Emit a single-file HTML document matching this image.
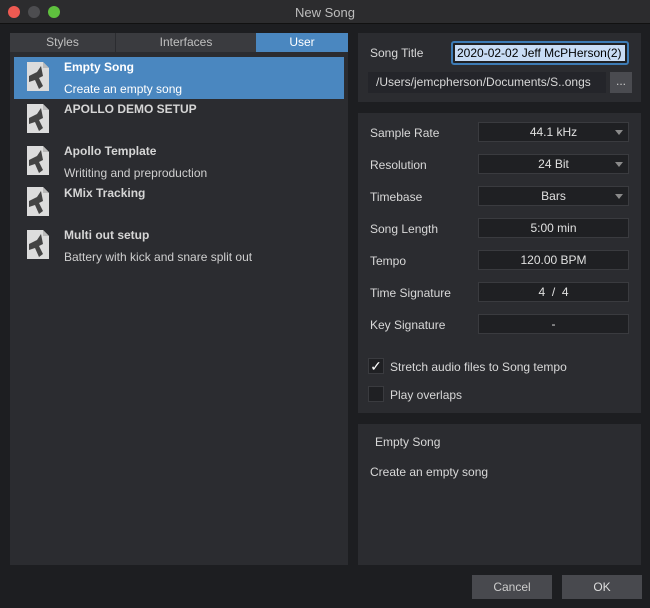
<!DOCTYPE html>
<html><head><style>
*{margin:0;padding:0;box-sizing:border-box}
body{width:650px;height:608px;background:#1d1e21;font-family:"Liberation Sans",sans-serif;font-size:12px;color:#d0d0d0;position:relative;overflow:hidden}
.a{position:absolute}
.panel{position:absolute;background:#2b2c30}
.lbl{position:absolute;left:370px;color:#d8d8d8;font-size:12px}
.fld{position:absolute;left:478px;width:151px;height:20px;background:#1f2023;border:1px solid #3a3b3f;color:#e0e0e0;text-align:center;line-height:18px;font-size:12px}
.arr{position:absolute;right:5px;top:7px;width:0;height:0;border-left:4px solid transparent;border-right:4px solid transparent;border-top:5px solid #8a8a8a}
.t{position:absolute;left:64px;font-weight:bold;color:#d6d6d6;font-size:12px}
.s{position:absolute;left:64px;color:#cfcfcf;font-size:12px}
.ic{position:absolute;left:27px}
</style></head><body>
<div class="a" style="left:0;top:0;width:650px;height:24px;background:#2c2c2e;border-bottom:1px solid #111"></div>
<div class="a" style="left:8px;top:6px;width:12px;height:12px;border-radius:50%;background:#ee5a52"></div>
<div class="a" style="left:28px;top:6px;width:12px;height:12px;border-radius:50%;background:#4d4d50"></div>
<div class="a" style="left:48px;top:6px;width:12px;height:12px;border-radius:50%;background:#5fc13e"></div>
<div class="a" style="left:0;top:5px;width:650px;text-align:center;color:#bdbdbd;font-size:13px">New Song</div>

<div class="panel" style="left:10px;top:33px;width:338px;height:532px"></div>
<div class="a" style="left:10px;top:33px;width:105px;height:19px;background:#3a3b3f;text-align:center;line-height:19px;color:#c0c0c0">Styles</div>
<div class="a" style="left:116px;top:33px;width:140px;height:19px;background:#3a3b3f;text-align:center;line-height:19px;color:#c0c0c0">Interfaces</div>
<div class="a" style="left:256px;top:33px;width:92px;height:19px;background:#4a87c0;text-align:center;line-height:19px;color:#fff">User</div>
<div class="a" style="left:14px;top:57px;width:330px;height:42px;background:#4a87c0"></div>

<svg width="0" height="0" style="position:absolute"><defs><g id="doc"><path d="M0 0H16L22 6V29H0Z" fill="#dcdcdc"/><path d="M16 0V6H22" fill="#bbb"/><path d="M2 14L10 10L14 4L16 14L12 16L16 24L12 27L8 18L2 20Z" fill="#444"/></g></defs></svg>
<svg class="ic" style="top:62px" width="23" height="30"><use href="#doc"/></svg>
<svg class="ic" style="top:104px" width="23" height="30"><use href="#doc"/></svg>
<svg class="ic" style="top:146px" width="23" height="30"><use href="#doc"/></svg>
<svg class="ic" style="top:187px" width="23" height="30"><use href="#doc"/></svg>
<svg class="ic" style="top:230px" width="23" height="30"><use href="#doc"/></svg>

<div class="t" style="top:60px;color:#fff">Empty Song</div>
<div class="s" style="top:82px;color:#fff">Create an empty song</div>
<div class="t" style="top:102px">APOLLO DEMO SETUP</div>
<div class="t" style="top:144px">Apollo Template</div>
<div class="s" style="top:166px">Writiting and preproduction</div>
<div class="t" style="top:186px">KMix Tracking</div>
<div class="t" style="top:228px">Multi out setup</div>
<div class="s" style="top:250px">Battery with kick and snare split out</div>

<div class="panel" style="left:358px;top:33px;width:283px;height:69px"></div>
<div class="lbl" style="top:46px">Song Title</div>
<div class="a" style="left:451px;top:41px;width:178px;height:24px;border:2px solid #3d7bb5;border-radius:3px;background:#1f2023;padding:2px"><div style="background:#c8dcf5;color:#000;font-size:12px;line-height:16px;padding-left:2px;white-space:nowrap;overflow:hidden">2020-02-02 Jeff McPHerson(2)</div></div>
<div class="a" style="left:368px;top:72px;width:238px;height:21px;background:#24252a;color:#d8d8d8;line-height:21px;padding-left:8px">/Users/jemcpherson/Documents/S..ongs</div>
<div class="a" style="left:610px;top:72px;width:22px;height:21px;background:#4a4b50;color:#ccc;text-align:center;line-height:18px">...</div>

<div class="panel" style="left:358px;top:113px;width:283px;height:300px"></div>
<div class="lbl" style="top:126px">Sample Rate</div><div class="fld" style="top:122px">44.1 kHz<div class="arr"></div></div>
<div class="lbl" style="top:158px">Resolution</div><div class="fld" style="top:154px">24 Bit<div class="arr"></div></div>
<div class="lbl" style="top:190px">Timebase</div><div class="fld" style="top:186px">Bars<div class="arr"></div></div>
<div class="lbl" style="top:222px">Song Length</div><div class="fld" style="top:218px">5:00 min</div>
<div class="lbl" style="top:254px">Tempo</div><div class="fld" style="top:250px">120.00 BPM</div>
<div class="lbl" style="top:286px">Time Signature</div><div class="fld" style="top:282px">4 &nbsp;/ &nbsp;4</div>
<div class="lbl" style="top:318px">Key Signature</div><div class="fld" style="top:314px">-</div>
<div class="a" style="left:368px;top:358px;width:16px;height:16px;background:#1f2023;border:1px solid #3a3b3f;color:#fff;font-size:14px;line-height:14px;text-align:center">✓</div>
<div class="a" style="left:390px;top:360px;color:#d8d8d8">Stretch audio files to Song tempo</div>
<div class="a" style="left:368px;top:386px;width:16px;height:16px;background:#1f2023;border:1px solid #3a3b3f"></div>
<div class="a" style="left:390px;top:388px;color:#d8d8d8">Play overlaps</div>

<div class="panel" style="left:358px;top:424px;width:283px;height:141px"></div>
<div class="a" style="left:375px;top:435px;color:#d8d8d8">Empty Song</div>
<div class="a" style="left:370px;top:465px;color:#d8d8d8">Create an empty song</div>

<div class="a" style="left:472px;top:575px;width:80px;height:24px;background:#48494e;text-align:center;line-height:24px;color:#ccc">Cancel</div>
<div class="a" style="left:562px;top:575px;width:80px;height:24px;background:#48494e;text-align:center;line-height:24px;color:#ddd">OK</div>
</body></html>
